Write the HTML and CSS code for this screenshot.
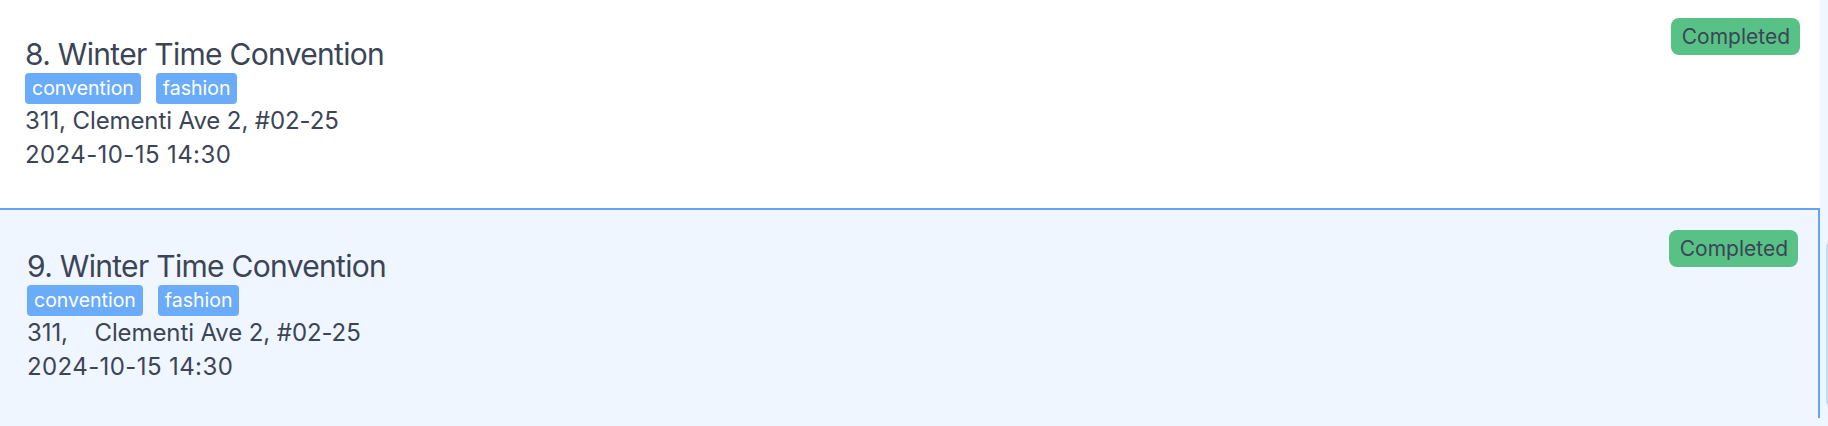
FILE: index.html
```html
<!DOCTYPE html>
<html lang="en">
<head>
<meta charset="utf-8">
<title>Events</title>
<link rel="stylesheet" href="styles.css">
</head>
<body>
<div class="frame">
  <div class="list">
    <div class="card">
      <div class="info">
        <div class="title">8. Winter Time Convention</div>
        <div class="tags">
          <span class="tag">convention</span>
          <span class="tag">fashion</span>
        </div>
        <div class="line">311, Clementi Ave 2, #02-25</div>
        <div class="line date">2024-10-15 14:30</div>
      </div>
      <span class="status">Completed</span>
    </div>
    <div class="card selected">
      <div class="info">
        <div class="title">9. Winter Time Convention</div>
        <div class="tags">
          <span class="tag">convention</span>
          <span class="tag">fashion</span>
        </div>
        <div class="line">311,&nbsp;&nbsp;&nbsp; Clementi Ave 2, #02-25</div>
        <div class="line date">2024-10-15 14:30</div>
      </div>
      <span class="status">Completed</span>
    </div>
  </div>
  <div class="track"><div class="thumb"></div></div>
</div>
</body>
</html>
```

FILE: styles.css
```css
html, body {
  margin: 0;
  padding: 0;
  height: 100%;
  overflow: hidden;
  background: #eff6ff;
  font-family: Inter, "Noto Sans", sans-serif;
  color: #3b4556;
}

.frame {
  display: flex;
  height: 100%;
}

.list {
  width: 1822px;
  flex: none;
  margin: -2px 0 0 -2px;
  display: flex;
  flex-direction: column;
}

.card {
  box-sizing: border-box;
  height: 210px;
  display: flex;
  align-items: flex-start;
  padding: 20px 20px 0 27px;
  background: #ffffff;
}

.card.selected {
  background: #eff6ff;
  border: 2px solid #60a5fa;
  border-bottom: none;
}

.info {
  flex: 1;
  padding-top: 18px;
}

.title {
  font-size: 30px;
  line-height: 36px;
  letter-spacing: -0.7px;
  white-space: pre;
}

.tags {
  display: flex;
  gap: 15px;
  margin-top: 1px;
}

.tag {
  background: #6aabfa;
  color: #ffffff;
  font-size: 19.5px;
  line-height: 23px;
  padding: 4px 7px;
  border-radius: 4px;
}

.line {
  font-size: 24px;
  line-height: 34px;
  letter-spacing: -0.1px;
  white-space: pre;
}

.line.date {
  letter-spacing: 0.4px;
}

.status {
  flex: none;
  background: #58c185;
  color: #3b4556;
  font-size: 21px;
  line-height: 25px;
  padding: 6px 10px 6px 11px;
  border-radius: 8px;
}

.track {
  flex: 1;
  display: flex;
  flex-direction: column;
  padding: 243px 0 0 6px;
}

.thumb {
  width: 6px;
  height: 162px;
  background: #bfdbfe;
  border-radius: 3px;
}
```
